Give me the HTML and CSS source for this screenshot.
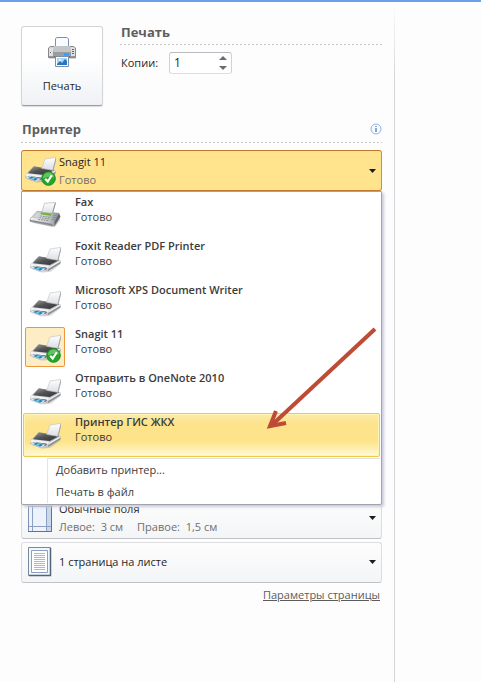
FILE: index.html
```html
<!DOCTYPE html>
<html lang="ru">
<head>
<meta charset="utf-8">
<title>Печать</title>
<link rel="stylesheet" href="styles.css">
</head>
<body>
<svg class="defs" aria-hidden="true">
  <defs>
    <linearGradient id="ink" x1="0" y1="0" x2="1" y2="1">
      <stop offset="0" stop-color="#a2a2a2"/><stop offset=".45" stop-color="#535355"/><stop offset="1" stop-color="#303032"/>
    </linearGradient>
    <linearGradient id="metal" x1="0" y1="0" x2="1" y2="0">
      <stop offset="0" stop-color="#f2f3f4"/><stop offset=".6" stop-color="#c4c7ca"/><stop offset="1" stop-color="#85898d"/>
    </linearGradient>
    <linearGradient id="sheet" x1="0" y1="0" x2="0" y2="1">
      <stop offset="0" stop-color="#ffffff"/><stop offset="1" stop-color="#dcdee2"/>
    </linearGradient>
    <linearGradient id="case" x1="0" y1="0" x2="0" y2="1">
      <stop offset="0" stop-color="#dedede"/><stop offset="1" stop-color="#8f9092"/>
    </linearGradient>
    <symbol id="printer" viewBox="0 0 96 84">
      <path d="M8 70 40 80 66 77 95 55 90 48Z" fill="#000" opacity=".12"/>
      <path d="M5 56 28 32 93 43 94 52 58 75 46 75 4 62Z" fill="url(#metal)" stroke="#a9acaf" stroke-width="1.5"/>
      <path d="M94 46 58 68 57 75 94 52Z" fill="#8a8e92"/>
      <path d="M92 43 60 62 58 68 94 47Z" fill="#eceeef"/>
      <path d="M30 31 90 42 62 57 11 52Z" fill="url(#ink)"/>
      <path d="M5 54 60 59 57 67 5 59Z" fill="#f3f4f5"/>
      <path d="M14 60 54 65 50 71 10 65Z" fill="#3a444d"/>
      <path d="M3 65 18 60 50 68 36 77Z" fill="#e4edf4" stroke="#a9b3bb" stroke-width="1.5"/>
      <path d="M12 66 22 62 43 68 33 74Z" fill="#287cc7"/>
      <path d="M20 67 28 65 33 68 27 72Z" fill="#65d0ce"/>
      <path d="M63 9 97 4 87 43 53 37Z" fill="url(#sheet)" stroke="#c3c5c8" stroke-width="2"/>
      <path d="M96 6 87 42" stroke="#85898d" stroke-width="2"/>
    </symbol>
    <symbol id="fax" viewBox="0 0 96 84">
      <path d="M8 62 76 76 95 54 88 40Z" fill="#000" opacity=".15"/>
      <path d="M4 50 24 28 90 34 93 44 78 71 68 72 3 58Z" fill="url(#metal)" stroke="#8f9295" stroke-width="2"/>
      <path d="M90 35 76 60 77 70 94 44Z" fill="#62676c"/>
      <path d="M3 53 71 66 71 71 3 58Z" fill="#84898e"/>
      <path d="M38 29 69 33 65 41 34 37Z" fill="#67b73a"/>
      <path d="M24 32 36 33 26 48 11 46Z" fill="#d3d6d8" stroke="#999" stroke-width="1"/>
      <path d="M34 42 64 46M31 47 62 51M28 52 60 56" stroke="#8a8e91" stroke-width="3" stroke-dasharray="5 3"/>
      <path d="M73 40 84 41M70 46 81 47M68 52 78 53" stroke="#8a8e91" stroke-width="3"/>
      <path d="M46 4 80 1 71 34 39 31Z" fill="url(#sheet)" stroke="#b0b3b5" stroke-width="2"/>
      <path d="M79 3 71 32" stroke="#6f7376" stroke-width="2"/>
    </symbol>
    <symbol id="check" viewBox="0 0 16 16">
      <circle cx="8" cy="8" r="7.3" fill="#27a52a" stroke="#178d1c"/>
      <path d="M2 8a6 6 0 0 1 12-1Q8 5 2 8" fill="#77cf70" opacity=".75"/>
      <path d="M4.5 8.3 7.2 11.3 11.5 4.5" fill="none" stroke="#fff" stroke-width="2.3"/>
    </symbol>
  </defs>
</svg>
<main class="backstage">
  <section class="pane">
    <div class="top">
      <button class="print" type="button">
        <svg width="32" height="32" viewBox="0 0 32 32" aria-hidden="true">
          <path d="M9.500 12V2.500L11 1.500H21L22.500 3V12Z" fill="#f8fbff" stroke="#7c91ad"/>
          <path d="M3 22H30V23H3Z" fill="#000" opacity=".15"/>
          <path d="M2.500 12 4.500 10.500H27.500L29.500 12V21.500H2.500Z" fill="url(#case)" stroke="#85878a"/>
          <path d="M8 10H24V16H8Z" fill="#c4c5c6"/>
          <path d="M7 17.500H25" stroke="#9a9c9e" stroke-width="3"/>
          <path d="M3 12H7V20H3ZM25 12H29V20H25Z" fill="#e0e0e0"/>
          <path d="M26 13.500H28M26 15.500H28M26 17.500H28M4 16.500H5" stroke="#66696c"/>
          <path d="M18 18.500H23" stroke="#3b94f3" stroke-width="2"/>
          <path d="M8 20.500H24" stroke="#66696c"/>
          <path d="M9.500 20.500H22.500V30.500H9.500Z" fill="#fff" stroke="#7890af"/>
          <path d="M11 22H21V29H11Z" fill="#a9d5f5"/>
          <path d="M11 28 14 25 16 27 19 23 21 25V29H11Z" fill="#2d74bf"/>
          <circle cx="14" cy="24" r="1" fill="#fff"/>
        </svg>
        <span>Печать</span>
      </button>
      <div class="job">
        <h2 class="heading">Печать</h2>
        <div class="copies">
          <label for="copies">Копии:</label>
          <div class="spin">
            <input id="copies" type="text" inputmode="numeric" value="1">
            <div class="arrows">
              <button type="button" aria-label="Больше"><svg width="8" height="4" viewBox="0 0 8 4"><path d="M0 4 4 0 8 4Z"/></svg></button>
              <button type="button" aria-label="Меньше"><svg width="8" height="4" viewBox="0 0 8 4"><path d="M0 0H8L4 4Z"/></svg></button>
            </div>
          </div>
        </div>
      </div>
    </div>
    <h2 class="heading printer-heading">Принтер
      <svg width="12" height="12" viewBox="0 0 12 12" aria-hidden="true"><circle cx="6" cy="6" r="5" fill="#f7fbff" stroke="#8db4e3"/><path d="M6 5V9M6 3V4" stroke="#3a6cae" stroke-width="1.200"/></svg>
    </h2>
    <div class="picker">
      <button class="combo current" type="button" aria-haspopup="true" aria-expanded="true">
        <span class="device"><svg class="pic"><use href="#printer"/></svg><svg class="ok"><use href="#check"/></svg></span>
        <span class="lines"><span>Snagit 11</span><span class="sub">Готово</span></span>
        <svg class="caret" viewBox="0 0 7 4"><path d="M0 0H7L3.500 4Z"/></svg>
      </button>
      <div class="menu">
        <ul class="printers">
          <li><button type="button"><span class="device"><svg class="pic"><use href="#fax"/></svg></span><span class="names"><b>Fax</b><span>Готово</span></span></button></li>
          <li><button type="button"><span class="device"><svg class="pic"><use href="#printer"/></svg></span><span class="names"><b>Foxit Reader PDF Printer</b><span>Готово</span></span></button></li>
          <li><button type="button"><span class="device"><svg class="pic"><use href="#printer"/></svg></span><span class="names"><b>Microsoft XPS Document Writer</b><span>Готово</span></span></button></li>
          <li><button type="button"><span class="device chosen"><svg class="pic"><use href="#printer"/></svg><svg class="ok"><use href="#check"/></svg></span><span class="names"><b>Snagit 11</b><span>Готово</span></span></button></li>
          <li><button type="button"><span class="device"><svg class="pic"><use href="#printer"/></svg></span><span class="names"><b>Отправить в OneNote 2010</b><span>Готово</span></span></button></li>
          <li><button class="hot" type="button"><span class="device"><svg class="pic"><use href="#printer"/></svg></span><span class="names"><b>Принтер ГИС ЖКХ</b><span>Готово</span></span></button></li>
        </ul>
        <ul class="commands">
          <li><button type="button">Добавить принтер...</button></li>
          <li><button type="button">Печать в файл</button></li>
        </ul>
        <svg class="pointer" viewBox="0 0 112 106" aria-hidden="true">
          <path d="M109 3 7 98" stroke="#be4b35" stroke-width="4" fill="none"/>
          <path d="M10 85 4 100 20 97" stroke="#be4b35" stroke-width="4" fill="none"/>
        </svg>
      </div>
    </div>
    <div class="settings">
      <button class="combo" type="button">
        <svg class="sheet" viewBox="0 0 24 30" aria-hidden="true">
          <path d="M.5 .5H23.500V28.500H.5Z" fill="#eef3fb" stroke="#7d93b5"/>
          <path d="M19 1H23V28H19Z" fill="#cbd7ea"/>
          <path d="M4.500 1V28M18.500 1V28M1 3.500H23M1 23.500H23" stroke="#8ba0c2"/>
          <path d="M23.500 1V28.500H0" fill="none" stroke="#5d7393"/>
        </svg>
        <span class="lines"><span>Обычные поля</span><span class="sub pair"><span>Левое:&nbsp; 3 см</span><span>Правое:&nbsp; 1,5 см</span></span></span>
        <svg class="caret" viewBox="0 0 7 4"><path d="M0 0H7L3.500 4Z"/></svg>
      </button>
      <button class="combo" type="button">
        <svg class="sheet" viewBox="0 0 24 30" aria-hidden="true">
          <path d="M.5 .5H22.500V28.500H.5Z" fill="#f3f7fc" stroke="#7589a2"/>
          <path d="M3.500 3.500H19.500V25.500H3.500Z" fill="#fff" stroke="#8ba0c2"/>
          <path d="M6 6.500H17M6 8.500H17M6 10.500H17M6 12.500H17M6 14.500H17M6 16.500H17M6 18.500H17M6 20.500H17M6 22.500H17" stroke="#b4b7bb"/>
          <path d="M22.500 1V28.500H1" fill="none" stroke="#4e657e" stroke-width="1.500"/>
        </svg>
        <span class="lines"><span>1 страница на листе</span></span>
        <svg class="caret" viewBox="0 0 7 4"><path d="M0 0H7L3.500 4Z"/></svg>
      </button>
    </div>
    <a class="setup" href="#">Параметры страницы</a>
  </section>
</main>
</body>
</html>
```
FILE: styles.css
```css
* {
  box-sizing: border-box;
}

body {
  margin: 0;
  background: #fdfdfd;
  color: #262626;
  font: 11px/16px "Open Sans", "Noto Sans", sans-serif;
}

button,
input {
  margin: 0;
  padding: 0;
  border: 0;
  background: none;
  color: inherit;
  font: inherit;
  text-align: left;
}

ul {
  margin: 0;
  padding: 0;
  list-style: none;
}

b {
  font-weight: 600;
}

.defs {
  position: absolute;
  width: 0;
  height: 0;
}

.backstage {
  display: grid;
  grid-template-columns: minmax(0, 395px) 1fr;
  min-height: 100vh;
  border-top: 2px solid #6b9fec;
}

.pane {
  padding: 24px 12px 24px 21px;
  border-right: 1px solid;
  border-image: linear-gradient(#fdfdfd, #d5d5d7 80px) 1;
}

.top {
  display: flex;
  gap: 17px;
}

.print {
  display: flex;
  flex-direction: column;
  align-items: center;
  gap: 10px;
  width: 82px;
  height: 80px;
  padding-top: 9px;
  border: 1px solid #d3d4d6;
  border-bottom-color: #9b9da1;
  border-radius: 3px;
  background: linear-gradient(#ffffff 40%, #eff1f4);
  box-shadow: 0 1px 1px #dcdde0;
}

.job {
  flex: 1;
}

.heading {
  display: flex;
  align-items: center;
  justify-content: space-between;
  height: 19px;
  margin: 0;
  padding: 0 0 8px 1px;
  background: repeating-linear-gradient(90deg, #c6c6c6 0 2px, transparent 2px 4px) left bottom / 100% 1px no-repeat;
  color: #5e5e5e;
  font-size: 13px;
  font-weight: 700;
}

.printer-heading {
  height: 20px;
  margin-top: 17px;
}

.copies {
  display: flex;
  align-items: center;
  gap: 11px;
  margin-top: 7px;
  padding-left: 1px;
}

.spin {
  display: flex;
  width: 63px;
  height: 22px;
  border: 1px solid;
  border-color: #b9bbc0 #cfd1d8 #dcdfe6;
  border-radius: 3px;
  background: #fff;
}

.spin input {
  flex: 1;
  min-width: 0;
  padding-left: 4px;
  font-size: 12px;
}

.arrows {
  display: grid;
  width: 12px;
}

.arrows button {
  display: grid;
  place-items: center start;
}

.arrows svg {
  fill: #6c6c6c;
}

.picker {
  position: relative;
  margin-top: 7px;
}

.combo {
  display: flex;
  align-items: center;
  width: 100%;
  height: 41px;
  padding: 0 5px 2px 6px;
  border: 1px solid #dcdddf;
  border-bottom-color: #c0c2c5;
  border-radius: 3px;
  background: linear-gradient(#fdfdfd, #f3f5f6);
}

.current {
  padding: 0 5px 0 2px;
  border-color: #c2762b #c89038;
  background: #ffe38d;
}

.combo .device {
  margin-right: 3px;
}

.lines {
  display: grid;
  flex: 1;
  row-gap: 2px;
}

.sub {
  color: #6f6f6f;
}

.pair {
  display: flex;
  gap: 14px;
}

.caret {
  width: 7px;
  height: 4px;
  fill: #1c1c1c;
}

.sheet {
  width: 24px;
  height: 30px;
  margin-right: 7px;
}

.device {
  position: relative;
  flex: none;
  display: block;
  width: 32px;
  height: 30px;
}

.pic {
  display: block;
  width: 32px;
  height: 28px;
}

.ok {
  position: absolute;
  right: 0;
  bottom: 0;
  width: 15px;
  height: 15px;
}

.menu {
  position: absolute;
  z-index: 1;
  top: 100%;
  left: 0;
  width: 100%;
  padding: 1px;
  border: 1px solid #a3a4aa;
  border-radius: 0 0 2px 2px;
  background: #fff;
  box-shadow: 2px 2px 3px #c9c9dc;
}

.printers button {
  display: flex;
  gap: 10px;
  width: 100%;
  height: 44px;
  padding: 0 1px;
  border: 1px solid transparent;
  border-radius: 2px;
}

.printers .device {
  width: 40px;
  height: 40px;
  margin-top: 1px;
  padding: 6px 3px;
  border: 1px solid transparent;
  border-radius: 2px;
}

.printers .chosen {
  border-color: #f0953a;
  background: #fcedc4;
}

.printers .ok {
  right: 3px;
  bottom: 3px;
}

.printers .hot {
  border-color: #f0ca4c;
  background: linear-gradient(#fbeaa9, #fde389 25%, #fde389 65%, #fffbd8);
  box-shadow: inset 0 0 0 1px #fff3b5;
}

.names {
  display: flex;
  flex-direction: column;
  color: #3b3b3b;
  line-height: 15px;
}

.commands {
  margin: 2px 0 0 24px;
  border-left: 1px solid #e2e3e5;
  box-shadow: 0 -1px #e2e3e5;
}

.commands li {
  height: 22px;
}

.commands button {
  width: 100%;
  height: 22px;
  padding-left: 8px;
  color: #3b3b3b;
}

.pointer {
  position: absolute;
  top: 134px;
  right: 3px;
  width: 112px;
  height: 106px;
}

.settings {
  display: grid;
  gap: 3px;
  margin-top: 307px;
}

.setup {
  display: block;
  margin: 4px 2px 0 0;
  color: #5c5c5c;
  text-align: right;
}
```
